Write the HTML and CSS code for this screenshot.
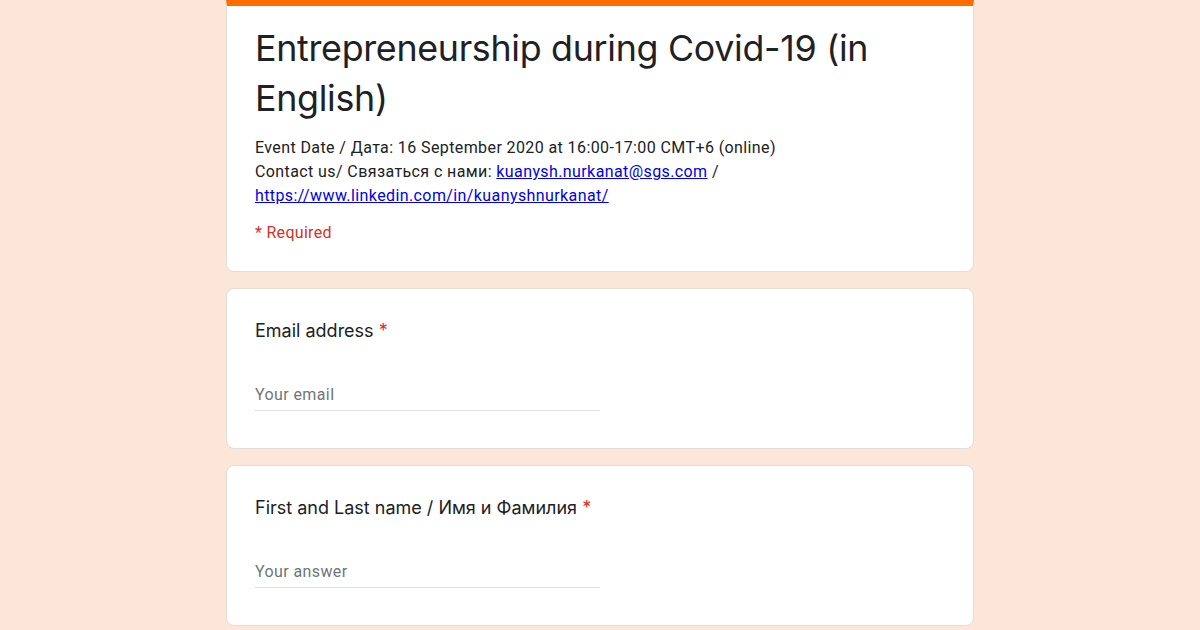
FILE: index.html
```html
<!DOCTYPE html>
<html lang="en">
<head>
    <meta charset="UTF-8">
    <meta name="viewport" content="width=device-width, initial-scale=1.0">
    <title>Entrepreneurship during Covid-19 (in English)</title>
    <link rel="stylesheet" href="styles.css">
</head>
<body>
    <div class="form">
        <!-- header card -->
        <div class="card header-card">
            <h1 class="form-title">Entrepreneurship during Covid-19 (in English)</h1>
            <div class="form-desc">
                Event Date / Дата: 16 September 2020 at 16:00-17:00 CMT+6 (online)<br>
                Contact us/ Связаться с нами: <a href="#">kuanysh.nurkanat@sgs.com</a> /<br>
                <a href="#">https://www.linkedin.com/in/kuanyshnurkanat/</a>
            </div>
            <div class="required-note">* Required</div>
        </div>

        <div class="card question">
            <div class="q-title">Email address <span class="star">*</span></div>
            <input type="email" class="answer" placeholder="Your email">
        </div>

        <div class="card question">
            <div class="q-title">First and Last name / Имя и Фамилия <span class="star">*</span></div>
            <input type="text" class="answer" placeholder="Your answer">
        </div>
    </div>
</body>
</html>
```

FILE: styles.css
```css
body {
    margin: 0;
    background: #fce6da;
    font-family: Roboto, Arial, sans-serif;
    color: #202124;
}

.form {
    width: 748px;
    margin: 0 auto;
}

.card {
    background: #fff;
    border: 1px solid #e6dcd6;
    border-radius: 8px;
    margin-bottom: 16px;
    padding: 0 28px;
}

.header-card {
    border-top: 6px solid #ff6d00;
    border-radius: 0 0 8px 8px;
    padding-top: 17px;
    padding-bottom: 29px;
}

.form-title {
    font-family: Inter, sans-serif;
    font-weight: 400;
    font-size: 35.8px;
    line-height: 50px;
    margin: 0;
    color: #202124;
    letter-spacing: -0.3px;
}

.form-desc {
    font-size: 16px;
    line-height: 24px;
    margin-top: 13px;
    color: #202124;
    letter-spacing: 0.4px;
}

.form-desc a {
    color: #0000ee;
}

.required-note {
    color: #d93025;
    font-size: 16px;
    letter-spacing: 0.3px;
    margin-top: 15px;
}

.question {
    padding-top: 29px;
    padding-bottom: 37px;
}

.q-title {
    font-family: Inter, sans-serif;
    font-size: 18px;
    line-height: 26px;
    color: #202124;
}

.star {
    color: #d93025;
}

.answer {
    display: block;
    width: 345px;
    margin-top: 41px;
    padding: 0 0 6px;
    border: none;
    border-bottom: 1px solid #e0e0e0;
    font-family: Roboto, Arial, sans-serif;
    font-size: 16px;
    letter-spacing: 0.4px;
    outline: none;
}

.answer::placeholder {
    color: #70757a;
}
```
